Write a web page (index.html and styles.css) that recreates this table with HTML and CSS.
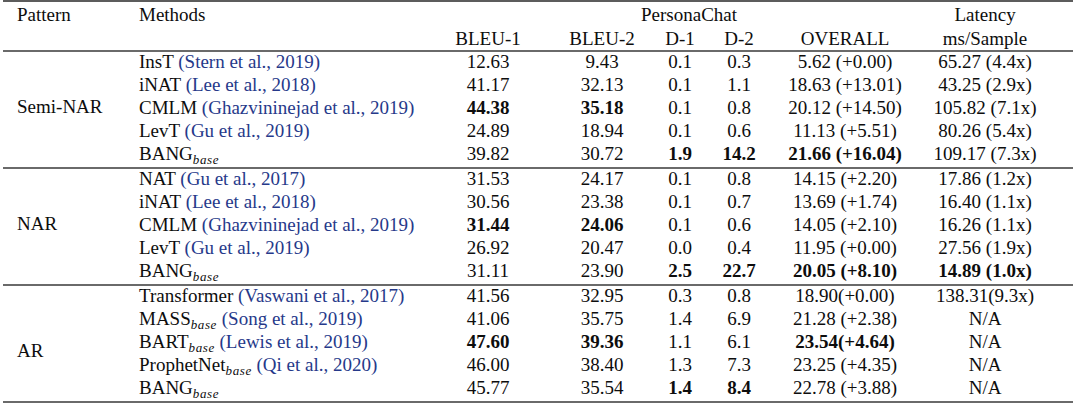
FILE: index.html
```html
<!DOCTYPE html>
<html>
<head>
<meta charset="utf-8">
<link rel="stylesheet" href="styles.css">
</head>
<body>
<table class="results">
  <colgroup>
    <col class="c-pattern"><col class="c-method"><col class="c-b1"><col class="c-b2"><col class="c-d1"><col class="c-d2"><col class="c-overall"><col class="c-lat"><col class="c-pad">
  </colgroup>
  <thead>
    <tr class="h1">
      <th class="left pat">Pattern</th>
      <th class="left">Methods</th>
      <th colspan="5" class="persona">PersonaChat</th>
      <th>Latency</th>
      <th></th>
    </tr>
    <tr class="h2">
      <th></th><th></th>
      <th>BLEU-1</th><th>BLEU-2</th><th>D-1</th><th>D-2</th><th>OVERALL</th><th>ms/Sample</th><th></th>
    </tr>
  </thead>
  <tbody>
    <tr>
      <td rowspan="5" class="left pat grp">Semi-NAR</td>
      <td class="left">InsT <span class="cite">(Stern et al., 2019)</span></td>
      <td>12.63</td><td>9.43</td><td>0.1</td><td>0.3</td><td>5.62 (+0.00)</td><td>65.27 (4.4x)</td><td></td>
    </tr>
    <tr>
      <td class="left">iNAT <span class="cite">(Lee et al., 2018)</span></td>
      <td>41.17</td><td>32.13</td><td>0.1</td><td>1.1</td><td>18.63 (+13.01)</td><td>43.25 (2.9x)</td><td></td>
    </tr>
    <tr>
      <td class="left">CMLM <span class="cite">(Ghazvininejad et al., 2019)</span></td>
      <td><b>44.38</b></td><td><b>35.18</b></td><td>0.1</td><td>0.8</td><td>20.12 (+14.50)</td><td>105.82 (7.1x)</td><td></td>
    </tr>
    <tr>
      <td class="left">LevT <span class="cite">(Gu et al., 2019)</span></td>
      <td>24.89</td><td>18.94</td><td>0.1</td><td>0.6</td><td>11.13 (+5.51)</td><td>80.26 (5.4x)</td><td></td>
    </tr>
    <tr class="last">
      <td class="left">BANG<sub class="base">base</sub></td>
      <td>39.82</td><td>30.72</td><td><b>1.9</b></td><td><b>14.2</b></td><td><b>21.66 (+16.04)</b></td><td>109.17 (7.3x)</td><td></td>
    </tr>
  </tbody>
  <tbody>
    <tr>
      <td rowspan="5" class="left pat grp">NAR</td>
      <td class="left">NAT <span class="cite">(Gu et al., 2017)</span></td>
      <td>31.53</td><td>24.17</td><td>0.1</td><td>0.8</td><td>14.15 (+2.20)</td><td>17.86 (1.2x)</td><td></td>
    </tr>
    <tr>
      <td class="left">iNAT <span class="cite">(Lee et al., 2018)</span></td>
      <td>30.56</td><td>23.38</td><td>0.1</td><td>0.7</td><td>13.69 (+1.74)</td><td>16.40 (1.1x)</td><td></td>
    </tr>
    <tr>
      <td class="left">CMLM <span class="cite">(Ghazvininejad et al., 2019)</span></td>
      <td><b>31.44</b></td><td><b>24.06</b></td><td>0.1</td><td>0.6</td><td>14.05 (+2.10)</td><td>16.26 (1.1x)</td><td></td>
    </tr>
    <tr>
      <td class="left">LevT <span class="cite">(Gu et al., 2019)</span></td>
      <td>26.92</td><td>20.47</td><td>0.0</td><td>0.4</td><td>11.95 (+0.00)</td><td>27.56 (1.9x)</td><td></td>
    </tr>
    <tr class="last">
      <td class="left">BANG<sub class="base">base</sub></td>
      <td>31.11</td><td>23.90</td><td><b>2.5</b></td><td><b>22.7</b></td><td><b>20.05 (+8.10)</b></td><td><b>14.89 (1.0x)</b></td><td></td>
    </tr>
  </tbody>
  <tbody>
    <tr>
      <td rowspan="5" class="left pat grp ar">AR</td>
      <td class="left">Transformer <span class="cite">(Vaswani et al., 2017)</span></td>
      <td>41.56</td><td>32.95</td><td>0.3</td><td>0.8</td><td>18.90(+0.00)</td><td>138.31(9.3x)</td><td></td>
    </tr>
    <tr>
      <td class="left">MASS<sub class="base">base</sub> <span class="cite">(Song et al., 2019)</span></td>
      <td>41.06</td><td>35.75</td><td>1.4</td><td>6.9</td><td>21.28 (+2.38)</td><td>N/A</td><td></td>
    </tr>
    <tr>
      <td class="left">BART<sub class="base">base</sub> <span class="cite">(Lewis et al., 2019)</span></td>
      <td><b>47.60</b></td><td><b>39.36</b></td><td>1.1</td><td>6.1</td><td><b>23.54(+4.64)</b></td><td>N/A</td><td></td>
    </tr>
    <tr>
      <td class="left">ProphetNet<sub class="base">base</sub> <span class="cite">(Qi et al., 2020)</span></td>
      <td>46.00</td><td>38.40</td><td>1.3</td><td>7.3</td><td>23.25 (+4.35)</td><td>N/A</td><td></td>
    </tr>
    <tr class="last">
      <td class="left">BANG<sub class="base">base</sub></td>
      <td>45.77</td><td>35.54</td><td><b>1.4</b></td><td><b>8.4</b></td><td>22.78 (+3.88)</td><td>N/A</td><td></td>
    </tr>
  </tbody>
</table>
</body>
</html>
```

FILE: styles.css
```css
html, body {
  margin: 0;
  padding: 0;
  background: #ffffff;
}

.results {
  margin-left: 3px;
  width: 1070px;
  table-layout: fixed;
  border-collapse: separate;
  border-spacing: 0;
  font-family: "Liberation Serif", "Times New Roman", serif;
  font-size: 19px;
  color: #0d0d0d;
  line-height: 1;
}

.c-pattern { width: 136px; }
.c-method { width: 283px; }
.c-b1 { width: 132px; }
.c-b2 { width: 96px; }
.c-d1 { width: 60px; }
.c-d2 { width: 58px; }
.c-overall { width: 154px; }
.c-lat { width: 126px; }
.c-pad { width: 25px; }

.results th,
.results td {
  padding: 0;
  text-align: center;
  vertical-align: middle;
  font-weight: normal;
  white-space: nowrap;
  overflow: visible;
}

.results .left { text-align: left; }
.results .pat { padding-left: 14px; }

.h1 th {
  height: 26px;
  border-top: 2px solid #5c5c5c;
  box-sizing: border-box;
}
.h2 th {
  height: 26px;
  border-bottom: 2px solid #6a6a6a;
  box-sizing: border-box;
}
.results .persona { padding-left: 34px; }

tbody td {
  height: 23px;
  box-sizing: border-box;
  padding-bottom: 4px;
}
.results tbody td { padding-bottom: 4px; }
tbody tr.last td,
tbody td.grp {
  border-bottom: 2px solid #6a6a6a;
}
tbody tr.last td { height: 25px; }
.results tbody td.grp { padding-bottom: 6px; }
.results tbody td.ar { padding-top: 14px; padding-bottom: 0; }

.cite { color: #26398a; }

.results b { font-weight: bold; }

.base {
  font-style: italic;
  font-size: 13px;
  letter-spacing: 0.6px;
  vertical-align: -4px;
  line-height: 0;
}
```
